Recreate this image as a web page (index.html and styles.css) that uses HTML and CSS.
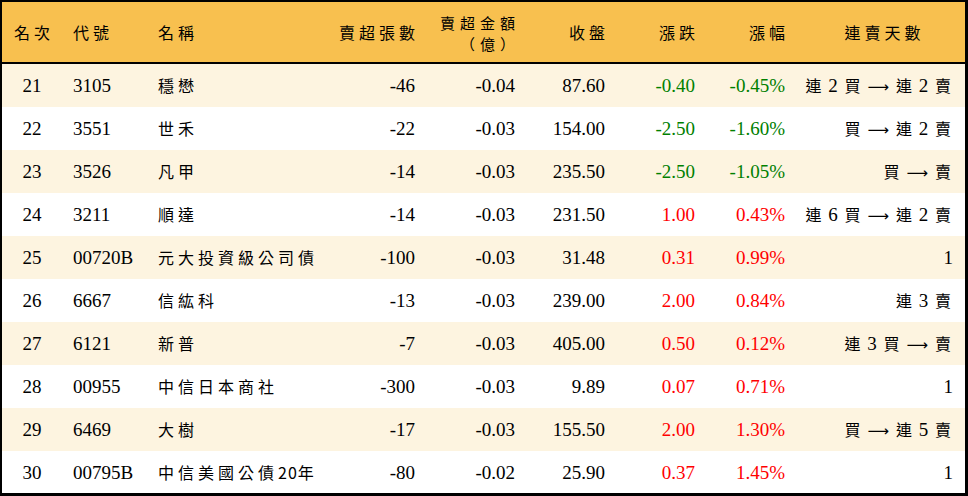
FILE: index.html
```html
<!DOCTYPE html>
<html lang="zh-Hant">
<head>
<meta charset="utf-8">
<title>賣超排行</title>
<link rel="stylesheet" href="styles.css">
</head>
<body>
<div class="frame">
<table class="tbl">
<colgroup>
<col class="c1"><col class="c2"><col class="c3"><col class="c4"><col class="c5"><col class="c6"><col class="c7"><col class="c8"><col class="c9">
</colgroup>
<thead>
<tr>
<th class="ctr"><span class="z">名次</span></th>
<th class="lft"><span class="z">代號</span></th>
<th class="lft nm"><span class="z">名稱</span></th>
<th class="rgt"><span class="z">賣超張數</span></th>
<th class="rgt two"><span class="z">賣超金額</span><br><span class="z">（億）</span></th>
<th class="rgt"><span class="z">收盤</span></th>
<th class="rgt"><span class="z">漲跌</span></th>
<th class="rgt"><span class="z">漲幅</span></th>
<th class="ctr last"><span class="z">連賣天數</span></th>
</tr>
</thead>
<tbody>
<tr class="odd">
<td class="ctr">21</td><td class="lft">3105</td><td class="lft nm"><span class="z">穩懋</span></td>
<td class="rgt">-46</td><td class="rgt">-0.04</td><td class="rgt">87.60</td>
<td class="rgt dn">-0.40</td><td class="rgt dn">-0.45%</td>
<td class="rgt last"><span class="k">連</span> 2 <span class="k">買</span> <span class="arr">⟶</span> <span class="k">連</span> 2 <span class="k">賣</span></td>
</tr>
<tr>
<td class="ctr">22</td><td class="lft">3551</td><td class="lft nm"><span class="z">世禾</span></td>
<td class="rgt">-22</td><td class="rgt">-0.03</td><td class="rgt">154.00</td>
<td class="rgt dn">-2.50</td><td class="rgt dn">-1.60%</td>
<td class="rgt last"><span class="k">買</span> <span class="arr">⟶</span> <span class="k">連</span> 2 <span class="k">賣</span></td>
</tr>
<tr class="odd">
<td class="ctr">23</td><td class="lft">3526</td><td class="lft nm"><span class="z">凡甲</span></td>
<td class="rgt">-14</td><td class="rgt">-0.03</td><td class="rgt">235.50</td>
<td class="rgt dn">-2.50</td><td class="rgt dn">-1.05%</td>
<td class="rgt last"><span class="k">買</span> <span class="arr">⟶</span> <span class="k">賣</span></td>
</tr>
<tr>
<td class="ctr">24</td><td class="lft">3211</td><td class="lft nm"><span class="z">順達</span></td>
<td class="rgt">-14</td><td class="rgt">-0.03</td><td class="rgt">231.50</td>
<td class="rgt up">1.00</td><td class="rgt up">0.43%</td>
<td class="rgt last"><span class="k">連</span> 6 <span class="k">買</span> <span class="arr">⟶</span> <span class="k">連</span> 2 <span class="k">賣</span></td>
</tr>
<tr class="odd">
<td class="ctr">25</td><td class="lft">00720B</td><td class="lft nm"><span class="z">元大投資級公司債</span></td>
<td class="rgt">-100</td><td class="rgt">-0.03</td><td class="rgt">31.48</td>
<td class="rgt up">0.31</td><td class="rgt up">0.99%</td>
<td class="rgt last">1</td>
</tr>
<tr>
<td class="ctr">26</td><td class="lft">6667</td><td class="lft nm"><span class="z">信紘科</span></td>
<td class="rgt">-13</td><td class="rgt">-0.03</td><td class="rgt">239.00</td>
<td class="rgt up">2.00</td><td class="rgt up">0.84%</td>
<td class="rgt last"><span class="k">連</span> 3 <span class="k">賣</span></td>
</tr>
<tr class="odd">
<td class="ctr">27</td><td class="lft">6121</td><td class="lft nm"><span class="z">新普</span></td>
<td class="rgt">-7</td><td class="rgt">-0.03</td><td class="rgt">405.00</td>
<td class="rgt up">0.50</td><td class="rgt up">0.12%</td>
<td class="rgt last"><span class="k">連</span> 3 <span class="k">買</span> <span class="arr">⟶</span> <span class="k">賣</span></td>
</tr>
<tr>
<td class="ctr">28</td><td class="lft">00955</td><td class="lft nm"><span class="z">中信日本商社</span></td>
<td class="rgt">-300</td><td class="rgt">-0.03</td><td class="rgt">9.89</td>
<td class="rgt up">0.07</td><td class="rgt up">0.71%</td>
<td class="rgt last">1</td>
</tr>
<tr class="odd">
<td class="ctr">29</td><td class="lft">6469</td><td class="lft nm"><span class="z">大樹</span></td>
<td class="rgt">-17</td><td class="rgt">-0.03</td><td class="rgt">155.50</td>
<td class="rgt up">2.00</td><td class="rgt up">1.30%</td>
<td class="rgt last"><span class="k">買</span> <span class="arr">⟶</span> <span class="k">連</span> 5 <span class="k">賣</span></td>
</tr>
<tr>
<td class="ctr">30</td><td class="lft">00795B</td><td class="lft nm"><span class="z">中信美國公債<span class="dg">20</span>年</span></td>
<td class="rgt">-80</td><td class="rgt">-0.02</td><td class="rgt">25.90</td>
<td class="rgt up">0.37</td><td class="rgt up">1.45%</td>
<td class="rgt last">1</td>
</tr>
</tbody>
</table>
</div>
</body>
</html>
```

FILE: styles.css
```css
html, body {
  margin: 0;
  padding: 0;
  background: #ffffff;
}

.frame {
  width: 968px;
  height: 496px;
  box-sizing: border-box;
  border-style: solid;
  border-color: #000000;
  border-width: 2px 3px 3px 2px;
  overflow: hidden;
}

.tbl {
  width: 963px;
  border-collapse: collapse;
  border-spacing: 0;
  table-layout: fixed;
  font-family: "Liberation Serif", "Noto Sans CJK TC", serif;
  font-size: 19px;
  color: #000000;
}

.c1 { width: 60px; }
.c2 { width: 88px; }
.c3 { width: 180px; }
.c4 { width: 100px; }
.c5 { width: 100px; }
.c6 { width: 90px; }
.c7 { width: 90px; }
.c8 { width: 90px; }
.c9 { width: 165px; }

.tbl th {
  background: #f8c04f;
  height: 59px;
  padding: 0 15px 0 0;
  font-weight: normal;
  line-height: 24px;
  vertical-align: middle;
  border-bottom: 2px solid #000000;
  white-space: nowrap;
}

.tbl th.two {
  line-height: 21px;
  padding-top: 1px;
}

.tbl th.two .z {
  font-size: 15px;
  letter-spacing: 5px;
  margin-right: -5px;
}

.tbl td {
  height: 43px;
  padding: 0 15px 0 0;
  vertical-align: middle;
  line-height: 24px;
  white-space: nowrap;
  color: #000000;
}

.tbl tbody tr {
  background: #ffffff;
}

.tbl tbody tr.odd {
  background: #fdf4e0;
}

.ctr { text-align: center; }
.tbl .ctr { padding: 0; }
.lft { text-align: left; }
.tbl .lft { padding: 0 0 0 11px; }
.tbl .lft.nm { padding: 0 0 0 8px; }
.rgt { text-align: right; }
.tbl .last { padding-right: 12px; }
.tbl th.last { padding: 0; }

.z {
  font-family: "Noto Sans CJK TC", sans-serif;
  font-size: 16px;
  font-weight: 400;
  letter-spacing: 4px;
  margin-right: -4px;
  color: #000000;
}

.dg {
  letter-spacing: 1px;
}

.k {
  display: inline-block;
  width: 20px;
  text-align: center;
  font-family: "Noto Sans CJK TC", sans-serif;
  font-size: 16px;
}

.arr {
  display: inline-flex;
  justify-content: center;
  width: 22px;
  font-family: "DejaVu Sans", sans-serif;
  font-size: 15px;
}

.tbl .up { color: #ff0000; }
.tbl .dn { color: #008000; }
```
